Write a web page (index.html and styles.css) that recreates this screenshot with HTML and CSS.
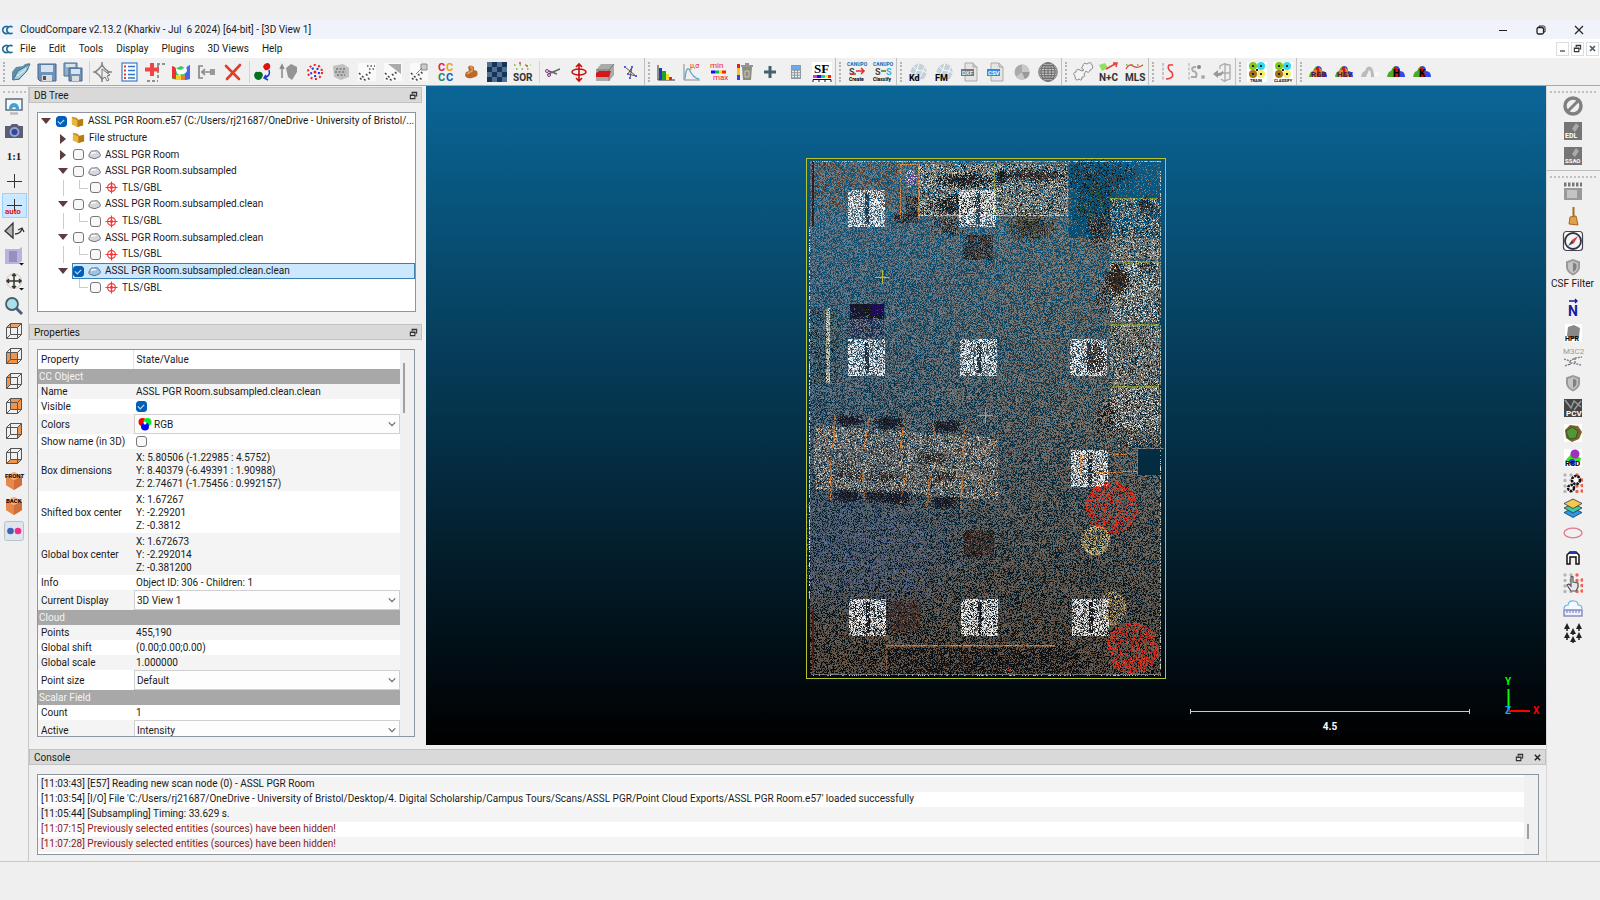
FILE: index.html
```html
<!DOCTYPE html>
<html lang="en">
<head>
  <meta charset="UTF-8">
  <title>CloudCompare</title>
  <link rel="stylesheet" href="styles.css">
</head>
<body>
  <!-- shapes used more than once -->
  <svg class="defs" aria-hidden="true">
    <symbol id="cc" viewBox="0 0 14 12"><path d="M7.500 2.500A4.300 4.300 0 1 0 7.500 9.500M12.500 2.500A4.300 4.300 0 1 0 12.500 9.500" fill="none" stroke="#1f6f9c" stroke-width="2"/></symbol>
    <symbol id="float" viewBox="0 0 10 10"><path d="M3.500 3.500V1.500H8.500V5.500H6.500M3.500 2H8.500" fill="none" stroke="#333" stroke-width="1.200"/><path d="M1.500 4.500H6.500V8.500H1.500ZM1.500 5H6.500" fill="none" stroke="#333" stroke-width="1.200"/></symbol>
    <symbol id="folder" viewBox="0 0 14 14"><path d="M1 2L6 3L8 5L13 4V11L7 13L1 10Z" fill="#c8901c"/><path d="M1 3L7 6V13L1 10Z" fill="#e9b63f"/><path d="M7 6L13 4V11L7 13Z" fill="#b67d12"/></symbol>
    <symbol id="cloud" viewBox="0 0 14 12"><path d="M4 9.500C1 10 0 6.500 2 5C2 2.500 5 1.500 6.500 2.500C9 1 12 2.500 12 4.500C14.500 6 13 9.500 10.500 9C9 10.800 5.500 10.800 4 9.500Z" fill="currentColor" stroke="#5a6068"/><path d="M3.500 5.500C4.500 3.500 7.500 3.500 8.500 4.500" fill="none" stroke="#fff" stroke-width="1.500"/></symbol>
    <symbol id="target" viewBox="0 0 14 14"><circle cx="7" cy="7" r="4.200" fill="none" stroke="#f33" stroke-width="1.300"/><circle cx="7" cy="7" r="1.600" fill="#f00"/><path d="M7 0.500V13.500M0.500 7H13.500" stroke="#f33" stroke-width="1.200"/></symbol>
    <symbol id="chev" viewBox="0 0 10 6"><path d="M1 1L5 5L9 1" fill="none" stroke="#666" stroke-width="1.400"/></symbol>
    <symbol id="cube" viewBox="0 0 20 20"><path d="M2.500 6.500H13.500V17.500H2.500ZM6.500 2.500H17.500V13.500H6.500ZM2.500 6.500L6.500 2.500M13.500 6.500L17.500 2.500M2.500 17.500L6.500 13.500M13.500 17.500L17.500 13.500" fill="none" stroke="#555"/></symbol>
    <symbol id="box" viewBox="0 0 20 20"><path d="M10 1L18 5V14L10 19L2 14V5Z" fill="#f09050"/><path d="M10 9L18 5V14L10 19Z" fill="#d07038"/><path d="M2 5L10 9V19L2 14Z" fill="#e8874a"/><path d="M2 5L10 1L18 5L10 9Z" fill="#f8b080"/></symbol>
    <symbol id="shield" viewBox="0 0 20 20"><path d="M10 2L17 4.500V11Q16 16 10 18.500Q4 16 3 11V4.500Z" fill="#999"/><path d="M10 4L15 6V11Q14 14.500 10 16.500Q6 14.500 5 11V6Z" fill="#c4c4c4"/><path d="M10 5.500L13.500 7V11Q13 13.500 10 15Z" fill="#808080"/></symbol>
    <symbol id="rock" viewBox="0 0 20 20"><path d="M2 10L5 4L11 1L17 4L19 11L16 17L6 18Z" fill="#c5d3d8"/><path d="M5 4L9 8L11 1M9 8L15 9L17 4M9 8L6 13L2 10M15 9L19 11M6 13L12 15L15 9" fill="none" stroke="#f5fafb"/></symbol>
    <symbol id="page" viewBox="0 0 20 20"><path d="M5 1H13L17 5V19H5Z" fill="#e4e4e4" stroke="#aaa"/><path d="M13 1V5H17" fill="#ccc" stroke="#aaa"/></symbol>
    <symbol id="dotgrid" viewBox="0 0 20 20"><path d="M2 2V20M8 2V20" stroke="#b5b5b5" stroke-width="3.400" stroke-linecap="round" stroke-dasharray="0 5.500"/><path d="M14 2V20M19 7V20" stroke="#f0604c" stroke-width="3.400" stroke-linecap="round" stroke-dasharray="0 5.500"/></symbol>
    <symbol id="quad" viewBox="0 0 20 20"><rect width="20" height="20" fill="#fff"/><circle cx="6" cy="4" r="4" fill="#7fc81c"/><circle cx="14" cy="4" r="4" fill="#30d8f0"/><circle cx="6" cy="12" r="4" fill="#a87410"/><circle cx="14" cy="12" r="4" fill="#f5ee70"/><path d="M5 4H7M13 4H15M5 12H7M13 12H15M9 8H11" stroke="#222" stroke-width="2"/></symbol>
    <symbol id="hills" viewBox="0 0 20 20"><path d="M1 15Q2 9 5 9Q7 4 10 4L11 15Z" fill="#4caa20"/><path d="M10 4Q14 4 14 9Q19 9 19 15H11Z" fill="#3048f0"/><path d="M8 15V5Q13 2 13 15Z" fill="#d01818"/></symbol>
    <symbol id="spots" viewBox="0 0 20 20"><rect x="1" y="1" width="18" height="18" fill="#fafafa"/><path d="M2 11l1.500 1.500M5 14l1.500 1.500M7 17l1.500 1.500M9 12l1.500 1.500M3 16l1.500 1.500M12 10l1.500 1.500M11 16l1.500 1.500" stroke="#444" stroke-width="1.600"/></symbol>
  </svg>

  <div class="app">
    <header class="titlebar">
      <svg class="app-icon"><use href="#cc"/></svg>
      <h1>CloudCompare v2.13.2 (Kharkiv - Jul  6 2024) [64-bit] - [3D View 1]</h1>
      <div class="window-buttons">
        <button aria-label="Minimize"><svg width="10" height="10"><path d="M1 5.500H9" stroke="#222"/></svg></button>
        <button aria-label="Restore"><svg width="10" height="10"><path d="M3 2.500V1H7.500Q9 1 9 2.500V7H7.500" fill="none" stroke="#222"/><rect x="1" y="2.500" width="6.500" height="6.500" rx="1.500" fill="none" stroke="#222" stroke-width="1.300"/></svg></button>
        <button aria-label="Close"><svg width="10" height="10"><path d="M1 1L9 9M9 1L1 9" stroke="#222" stroke-width="1.200"/></svg></button>
      </div>
    </header>

    <nav class="menubar">
      <svg class="app-icon"><use href="#cc"/></svg>
      <button>File</button><button>Edit</button><button>Tools</button><button>Display</button><button>Plugins</button><button>3D Views</button><button>Help</button>
      <div class="mdi-buttons">
        <button aria-label="Minimize view"><svg width="9" height="9"><path d="M2 7H7" stroke="#567" stroke-width="1.500"/></svg></button>
        <button aria-label="Restore view"><svg width="9" height="9"><use href="#float"/></svg></button>
        <button aria-label="Close view"><svg width="9" height="9"><path d="M2 2L7 7M7 2L2 7" stroke="#456" stroke-width="1.600"/></svg></button>
      </div>
    </nav>

    <div class="toolbar">
      <div class="group">
        <button title="Open"><svg viewBox="0 0 20 20"><path d="M1 10L5 5L12 4L14 2L19 1L17 8L8 18L1 18Z" fill="#5f8fa8"/><path d="M2 18L7 9L19 2L15 10L8 17Z" fill="#a9cfe0" stroke="#47758c"/><path d="M6 14L15 7" stroke="#e4f4fa"/></svg></button>
        <button title="Save"><svg viewBox="0 0 20 20"><path d="M1 2H19V19H3L1 17Z" fill="#6f92b8" stroke="#4a6486"/><rect x="4" y="3" width="12" height="7" fill="#d4e4f0"/><rect x="5" y="13" width="10" height="6" fill="#ddd"/><rect x="6" y="14" width="3" height="4" fill="#456"/></svg></button>
        <button title="Save all"><svg viewBox="0 0 20 20"><path d="M1 1H14V14H1Z" fill="#8fafcc" stroke="#4b6c90"/><rect x="3" y="2" width="9" height="3" fill="#d4e4f0"/><path d="M6 6H19V19H6Z" fill="#6f92b8" stroke="#4a6486"/><rect x="8" y="7" width="9" height="5" fill="#d4e4f0"/><rect x="9" y="14" width="7" height="5" fill="#ddd"/></svg></button>
        <span class="sep"></span>
        <button title="Pick point"><svg viewBox="0 0 20 20"><path d="M9 3L12 7L16 10L12 14L9 17L6 13L2 10L6 7Z" fill="none" stroke="#888" stroke-width="1.600"/><path d="M9 0V5M9 15V20M0 10H4M14 10H19" stroke="#888" stroke-width="1.600"/><path d="M9 7L17 13L14 14L16 18L14 19L12 15L9 17Z" fill="#eee" stroke="#777"/></svg></button>
        <button title="Point list"><svg viewBox="0 0 20 20"><rect x="3" y="1" width="15" height="18" fill="#f8fbff" stroke="#3c7cc8" stroke-width="1.200"/><path d="M5 4.500H7M5 8.500H7M5 12.500H7M5 16H7" stroke="#e04030" stroke-width="2"/><path d="M9 4.500H16M9 8.500H16M9 12.500H16M9 16H16" stroke="#3478c8" stroke-width="1.500"/></svg></button>
        <button title="Clone"><svg viewBox="0 0 20 20"><path d="M12 2H20M13 3V18M2 19H13" fill="none" stroke="#333" stroke-dasharray="3 2"/><path d="M7 1V14M0 7.500H14" stroke="#f04444" stroke-width="4"/></svg></button>
        <button title="Merge"><svg viewBox="0 0 20 20"><path d="M1 4L6 6L10 4L14 6L19 3V17L14 18H8L1 17Z" fill="#38c860"/><path d="M1 4L5 6V17L1 16Z" fill="#f03030"/><path d="M5 13H10V18H5Z" fill="#f4d020"/><path d="M10 13H14V18H10Z" fill="#f08020"/><path d="M14 6L19 3V17L14 18Z" fill="#4868e8"/><path d="M4 4C6 9 9 7 10 8C12 6 14 7 15 3L16 9Q14 13 11 12L8 13L6 11Z" fill="#fff"/></svg></button>
        <button title="Subsample"><svg viewBox="0 0 20 20"><path d="M6 4H2V16H6M5 10H13M8 7L5 10L8 13" fill="none" stroke="#888" stroke-width="1.700"/><rect x="13" y="7" width="5" height="6" fill="#999"/></svg></button>
        <button title="Delete"><svg viewBox="0 0 20 20"><path d="M3 4L16 17M17 3L4 17" stroke="#d8402c" stroke-width="2.600" stroke-linecap="round"/></svg></button>
        <span class="sep"></span>
        <button title="Register"><svg viewBox="0 0 20 20"><path d="M10 5Q11 1 15 1Q18 2 17 6Q15 9 12 8Z" fill="#e01010"/><path d="M1 13Q2 9 5 10Q9 9 10 13Q9 18 5 18Q1 17 1 13Z" fill="#087020"/><path d="M16 8Q18 14 11 16M13 13L11 16L15 18" fill="none" stroke="#1838d8" stroke-width="1.500"/></svg></button>
        <button title="Align"><svg viewBox="0 0 20 20"><path d="M3 16V4M1 7L3 3L5 7" fill="none" stroke="#888" stroke-width="1.500"/><path d="M7 6L12 2L18 5V10L13 18L9 15Z" fill="#949494"/></svg></button>
        <button title="Sample points"><svg viewBox="0 0 20 20"><circle cx="10" cy="10" r="7" fill="none" stroke="#f02020" stroke-width="2" stroke-dasharray="2 2.500"/><circle cx="10" cy="10" r="4" fill="none" stroke="#2030e0" stroke-width="2" stroke-dasharray="2 3"/><circle cx="10" cy="10" r="1.500" fill="#f02020"/></svg></button>
        <button title="Cloud distances"><svg viewBox="0 0 20 20"><path d="M2 4L12 2L18 6V15L10 18L3 15Z" fill="#c0c0c0"/><path d="M5 7H14M4 10H15M6 13H14" stroke="#888" stroke-width="2" stroke-dasharray="2 1.500"/></svg></button>
        <button title="Cloud to cloud"><svg viewBox="0 0 20 20"><use href="#spots"/><path d="M10 4H18M12 7H18" stroke="#555" stroke-dasharray="1.500 2" stroke-width="1.500"/></svg></button>
        <button title="Cloud to mesh"><svg viewBox="0 0 20 20"><use href="#spots"/><path d="M5 2H18V12Z" fill="#aaa"/></svg></button>
        <button title="Cloud to primitive"><svg viewBox="0 0 20 20"><use href="#spots"/><path d="M12 2H18V8H12ZM7 12L13 6" stroke="#888" fill="#ccc"/></svg></button>
        <button title="Statistics"><svg viewBox="0 0 20 20" class="bold"><text x="3" y="9" fill="#e02050" font-size="11">C</text><text x="11" y="9" fill="#f0a020" font-size="11">C</text><text x="3" y="19" fill="#109060" font-size="11">C</text><text x="11" y="19" fill="#1060c8" font-size="11">C</text></svg></button>
        <button title="Label components"><svg viewBox="0 0 20 20"><path d="M7 5Q9 2 13 5L13 8L16 9Q18 14 14 15L11 16Q5 17 4 13L5 10L8 9Z" fill="#b8692a"/><path d="M9 5Q12 5 11 9L6 12" fill="none" stroke="#e0a060" stroke-width="1.500"/></svg></button>
        <button title="Cross section"><svg viewBox="0 0 20 20"><rect width="20" height="20" fill="#1c3454"/><path d="M0 0H5V5H0ZM10 0H15V5H10ZM5 5H10V10H5ZM15 5H20V10H15ZM0 10H5V15H0ZM10 10H15V15H10ZM5 15H10V20H5ZM15 15H20V20H15Z" fill="#4c729c"/></svg></button>
        <button title="SOR filter"><svg viewBox="0 0 20 20" class="bold"><path d="M1 3H18M3 7H18" stroke="#70b030" stroke-width="1.500" stroke-dasharray="1.500 4"/><path d="M6 1h2M13 4h2" stroke="#e04040" stroke-width="1.500"/><text x="0" y="19" font-size="10" fill="#333">SOR</text></svg></button>
        <span class="sep"></span>
        <button title="Segment"><svg viewBox="0 0 20 20"><path d="M5 12L17 7M6 9L14 12" stroke="#666" stroke-width="1.400"/><circle cx="4" cy="9" r="1.500" fill="none" stroke="#803080"/><circle cx="6" cy="13" r="1.500" fill="none" stroke="#803080"/></svg></button>
        <button title="Translate/Rotate"><svg viewBox="0 0 20 20"><path d="M10 2V18M7 5L10 2L13 5M7 16L10 19L13 16" fill="none" stroke="#c81010" stroke-width="1.600"/><ellipse cx="10" cy="10" rx="7" ry="3" fill="none" stroke="#c81010" stroke-width="1.600"/></svg></button>
        <button title="Cross Section"><svg viewBox="0 0 20 20"><path d="M1 8L6 2H19V13L14 19H1Z" fill="#aaa"/><path d="M1 8H14L19 2M14 8V19" fill="none" stroke="#777"/><path d="M1 11L4 9H16L14 15H1Z" fill="#d81818"/></svg></button>
        <button title="Trace polyline"><svg viewBox="0 0 20 20"><path d="M4 5L15 14L7 12L11 5L9 16" fill="none" stroke="#555"/><path d="M3 5h2M14 14h2M6 12h2M10 5h2M8 16h2" stroke="#5060f0" stroke-width="2"/></svg></button>
      </div>
      <div class="group">
        <button title="Histogram"><svg viewBox="0 0 20 20"><path d="M2 3V18H19" fill="none" stroke="#333"/><rect x="3" y="6" width="3" height="12" fill="#2038c0"/><rect x="6" y="9" width="4" height="9" fill="#20a030"/><rect x="10" y="12" width="3" height="6" fill="#f0e020"/><rect x="13" y="15" width="3" height="3" fill="#f02020"/></svg></button>
        <button title="Fit distribution"><svg viewBox="0 0 20 20"><path d="M2 2V18H18" fill="none" stroke="#888"/><path d="M3 17Q4 5 7 7Q11 16 17 17" fill="none" stroke="#60a8d0" stroke-width="1.300"/><text x="8" y="6" font-size="7" fill="#e02020">μ,σ</text></svg></button>
        <button title="Min / max"><svg viewBox="0 0 20 20"><text x="2" y="6" font-size="8" fill="#f02020">min</text><path d="M3 10H7" stroke="#20f" stroke-width="3"/><path d="M7 10H11" stroke="#0b5" stroke-width="3"/><path d="M11 10H14" stroke="#fd0" stroke-width="3"/><path d="M14 10H18" stroke="#f20" stroke-width="3"/><text x="5" y="18" font-size="8" fill="#f02020">max</text></svg></button>
        <button title="Delete scalar field"><svg viewBox="0 0 20 20"><rect x="3" y="2" width="3" height="16" fill="#f8c020"/><path d="M4.500 2V6" stroke="#e02020" stroke-width="3"/><path d="M4.500 13V18" stroke="#3040f0" stroke-width="3"/><path d="M8 5H18L17 18H9Z" fill="#8c8c80"/><path d="M7 4H19M11 2H15" stroke="#777" stroke-width="1.500"/><path d="M11 9H15V15H11Z" fill="none" stroke="#c8c8b8"/></svg></button>
        <button title="Add constant"><svg viewBox="0 0 20 20"><path d="M10 4V16M4 10H16" stroke="#44606c" stroke-width="3"/></svg></button>
        <button title="Arithmetic"><svg viewBox="0 0 20 20"><rect x="5" y="3" width="10" height="14" fill="#8d99a5"/><rect x="6" y="4" width="8" height="3" fill="#6caae8"/><path d="M6 9.500H14M6 12H14M6 14.500H14" stroke="#eee" stroke-width="1.500" stroke-dasharray="2 1"/></svg></button>
        <button title="Scalar field"><svg viewBox="0 0 20 20" class="serif"><rect width="20" height="20" fill="#fff"/><text x="2" y="11" font-size="13">SF</text><path d="M1 14.500H5" stroke="#e030e0" stroke-width="3"/><path d="M5 14.500H9" stroke="#30f" stroke-width="3"/><path d="M9 14.500H13" stroke="#0d7" stroke-width="3"/><path d="M13 14.500H16" stroke="#fe0" stroke-width="3"/><path d="M16 14.500H19" stroke="#f20" stroke-width="3"/><path d="M1 20V17.500H19V20M7 17.500V20M13 17.500V20" fill="none" stroke="#111"/></svg></button>
      </div>
      <div class="group">
        <button title="CANUPO Create"><svg viewBox="0 0 20 20" class="bold"><text x="0" y="4" font-size="5" fill="#2068b0">CANUPO</text><text x="2" y="13" font-size="9" fill="#444">S</text><path d="M3 12H9M9 9H17M14 6L17 9L14 12" fill="none" stroke="#e03030" stroke-width="1.500"/><text x="2" y="19" font-size="5">Create</text></svg></button>
        <button title="CANUPO Classify"><svg viewBox="0 0 20 20" class="bold"><text x="0" y="4" font-size="5" fill="#2068b0">CANUPO</text><text x="2" y="13" font-size="9" fill="#444">S</text><text x="13" y="13" font-size="9" fill="#30b8e0">S</text><path d="M8 9H13" stroke="#308030" stroke-width="1.500"/><text x="0" y="19" font-size="5">Classify</text></svg></button>
      </div>
      <div class="group">
        <button title="Kd-tree"><svg viewBox="0 0 20 20" class="bold"><use href="#rock"/><text x="1" y="19" font-size="9">Kd</text></svg></button>
        <button title="Fast marching"><svg viewBox="0 0 20 20" class="bold"><use href="#rock"/><text x="1" y="19" font-size="9">FM</text></svg></button>
        <button title="Export DXF"><svg viewBox="0 0 20 20" class="bold"><use href="#page"/><rect x="1" y="7" width="13" height="7" fill="#777"/><text x="2" y="13" font-size="6" fill="#eee">DXF</text></svg></button>
        <button title="Export CSV"><svg viewBox="0 0 20 20" class="bold"><use href="#page"/><rect x="1" y="7" width="13" height="7" fill="#3888e0"/><text x="2" y="13" font-size="6" fill="#fff">CSV</text></svg></button>
        <button title="Facets"><svg viewBox="0 0 20 20"><circle cx="10" cy="10" r="7.500" fill="#aaa"/><path d="M10 10V2.500A7.500 7.500 0 0 1 17.500 10ZM10 10L4 15A7.500 7.500 0 0 0 13 17Z" fill="#c8c8c8"/><path d="M10 10H17.500A7.500 7.500 0 0 1 13 17Z" fill="#9a9a9a"/></svg></button>
        <button title="Stereogram"><svg viewBox="0 0 20 20"><g fill="none" stroke="#666" stroke-width="0.900"><circle cx="10" cy="10" r="9.300" fill="#ddd"/><ellipse cx="10" cy="10" rx="7" ry="9.300"/><ellipse cx="10" cy="10" rx="3.500" ry="9.300"/><path d="M10 1V19M1 10H19M2 6.500H18M2 13.500H18M4 3.500H16M4 16.500H16M1.500 8.300H18.500M1.500 11.700H18.500M3 5H17M3 15H17"/></g></svg></button>
      </div>
      <div class="group">
        <button title="Cluster"><svg viewBox="0 0 20 20"><path d="M2 14Q-1 11 3 10Q3 6 7 8Q9 10 11 8Q7 6 10 4Q10 0 14 2Q18 -1 19 3Q21 7 17 8Q16 12 13 9Q12 11 11 12Q13 15 9 15Q9 20 6 17Q2 20 2 14Z" fill="#f3f3f3" stroke="#888"/></svg></button>
        <button title="Normals and curvature"><svg viewBox="0 0 20 20" class="bold"><path d="M0 3L6 1L9 6L3 9Z" fill="#90e060"/><path d="M7 7L18 1M14 1H18L17 5" stroke="#e04040" stroke-width="1.500" fill="none"/><text x="0" y="19" font-size="10" fill="#333">N+C</text></svg></button>
        <button title="MLS"><svg viewBox="0 0 20 20" class="bold"><path d="M1 7Q4 1 8 4T18 3" fill="none" stroke="#e04040" stroke-width="1.300"/><path d="M1 3H18" stroke="#70b030" stroke-width="1.500" stroke-dasharray="1.500 4"/><text x="0" y="19" font-size="10" fill="#333">MLS</text></svg></button>
      </div>
      <div class="group">
        <button title="Extract section"><svg viewBox="0 0 20 20"><path d="M3 1V19" stroke="#999" stroke-dasharray="3 1.500"/><path d="M13 3H9Q7 6 10 9Q14 11 12 15Q10 17 6 17" fill="none" stroke="#f03838" stroke-width="1.500"/></svg></button>
        <button title="Section points"><svg viewBox="0 0 20 20"><path d="M3 1V19" stroke="#aaa" stroke-dasharray="3 1.500"/><path d="M10 5Q4 5 7 9Q12 10 10 15H5" fill="none" stroke="#aaa" stroke-width="2"/><circle cx="13" cy="5" r="2" fill="#888"/><circle cx="17" cy="15" r="2" fill="#aaa"/></svg></button>
        <button title="Unfold"><svg viewBox="0 0 20 20"><path d="M1 12L6 8V11Q10 11 11 8Q12 14 6 14V16Z" fill="#999"/><path d="M8 7V4L12 2L18 3V17L12 19L9 17M13 1V20M11 11H18" fill="none" stroke="#aaa" stroke-width="1.300"/></svg></button>
      </div>
      <div class="group">
        <button title="3DMASC train"><svg viewBox="0 0 20 20" class="bold"><use href="#quad"/><text x="3" y="20" font-size="4">TRAIN</text></svg></button>
        <button title="3DMASC classify"><svg viewBox="0 0 20 20" class="bold"><use href="#quad"/><text x="1" y="20" font-size="4">CLASSIFY</text></svg></button>
      </div>
      <div class="group">
        <button title="RGB"><svg viewBox="0 0 20 20" class="bold"><use href="#hills"/><path d="M3 15L6 8H9V15ZM11 5L14 8L15 15H12Z" fill="#e88020"/><text x="3" y="15" font-size="8" fill="#402050">RGB</text></svg></button>
        <button title="HSV"><svg viewBox="0 0 20 20" class="bold"><use href="#hills"/><path d="M3 15L6 8H9V15ZM11 5L14 8L15 15H12Z" fill="#f08030"/><text x="3" y="15" font-size="8" fill="#402050">HSV</text></svg></button>
        <button title="Filter"><svg viewBox="0 0 20 20"><path d="M1 15Q2 9 5 9Q7 3 11 5Q14 8 14 15H11Q11 8 9 8L6 15Z" fill="#bbb"/><circle cx="17" cy="12" r="2.500" fill="#f8f8f8"/></svg></button>
        <button title="Hillshade"><svg viewBox="0 0 20 20" class="bold"><use href="#hills"/><text x="7" y="15" font-size="10">H</text></svg></button>
        <button title="K-means"><svg viewBox="0 0 20 20" class="bold"><use href="#hills"/><text x="7" y="15" font-size="10">K</text></svg></button>
      </div>
    </div>

    <main class="workspace">
      <aside class="sidebar left">
        <div class="vgroup">
          <button title="Display settings"><svg viewBox="0 0 20 20"><rect x="2" y="3" width="16" height="11" fill="#f4fafc" stroke="#506478" stroke-width="1.400"/><path d="M5 13.500Q5 7 10 7Q15 7 15 13.500H12Q12 11 10 11Q8 11 8 13.500Z" fill="#40a0d8"/><path d="M6 17.500H14" stroke="#bbb" stroke-width="2.500"/></svg></button>
          <button title="Render to file"><svg viewBox="0 0 20 20"><path d="M1 5H6L8 3H13L15 5H19V17H1Z" fill="#5a5e74"/><circle cx="10.500" cy="11" r="5" fill="#98a2cc"/><circle cx="10.500" cy="11" r="3" fill="#3044a0"/></svg></button>
          <button title="Zoom 1:1" class="ratio">1:1</button>
          <button title="Set pivot"><svg viewBox="0 0 20 20"><path d="M10.500 3V17M3 10.500H18" stroke="#333"/></svg></button>
          <button title="Auto pivot" class="on"><svg viewBox="0 0 20 20" class="bold"><path d="M10.500 3V15M3 9.500H18" stroke="#333"/><text x="1" y="18" font-size="8" fill="#e01010">auto</text></svg></button>
          <button title="Rotate view"><svg viewBox="0 0 20 20"><path d="M9 2V17L1 10Z" fill="#b4b4b0" stroke="#333" stroke-width="1.300"/><path d="M11 13Q16 13 18 8M14 9L18 7L20 11" fill="none" stroke="#333" stroke-width="1.300"/></svg></button>
          <button title="View mode"><svg viewBox="0 0 20 20"><path d="M1 3H15L18 1V15L14 18H1Z" fill="#b9b4dc"/><rect x="5" y="5" width="8" height="11" fill="#9590be"/><path d="M15 17H20L17.500 19.500Z" fill="#111"/></svg></button>
          <button title="Pan"><svg viewBox="0 0 20 20"><circle cx="10" cy="10" r="7.500" fill="#eef4e8" stroke="#d8b8d0"/><path d="M10 3V17M3 10H17M8 5L10 3L12 5M8 15L10 17L12 15M5 8L3 10L5 12M15 8L17 10L15 12" fill="none" stroke="#333" stroke-width="1.500"/><path d="M15 17H20L17.500 19.500Z" fill="#111"/></svg></button>
          <button title="Zoom"><svg viewBox="0 0 20 20"><circle cx="8" cy="8" r="6" fill="#a8e0ec" stroke="#4a5c68" stroke-width="1.800"/><path d="M12.500 12.500L18 18" stroke="#4a6078" stroke-width="3"/></svg></button>
          <button title="Top view"><svg viewBox="0 0 20 20"><path d="M2.500 6.500L6.500 2.500H17.500L13.500 6.500Z" fill="#f0a060"/><use href="#cube"/></svg></button>
          <button title="Front view"><svg viewBox="0 0 20 20"><path d="M2.500 6.500H13.500V17.500H2.500Z" fill="#f0944c"/><use href="#cube"/></svg></button>
          <button title="Left view"><svg viewBox="0 0 20 20"><path d="M2.500 6.500L6.500 2.500V13.500L2.500 17.500Z" fill="#f0944c"/><use href="#cube"/></svg></button>
          <button title="Back view"><svg viewBox="0 0 20 20"><path d="M6.500 2.500H17.500V13.500H6.500Z" fill="#f0944c"/><use href="#cube"/></svg></button>
          <button title="Right view"><svg viewBox="0 0 20 20"><path d="M13.500 6.500L17.500 2.500V13.500L13.500 17.500Z" fill="#f0944c"/><use href="#cube"/></svg></button>
          <button title="Bottom view"><svg viewBox="0 0 20 20"><path d="M2.500 17.500L6.500 13.500H17.500L13.500 17.500Z" fill="#f0944c"/><use href="#cube"/></svg></button>
          <button title="Front isometric"><svg viewBox="0 0 20 20" class="bold"><use href="#box"/><text x="1" y="7" font-size="6">FRONT</text></svg></button>
          <button title="Back isometric"><svg viewBox="0 0 20 20" class="bold"><use href="#box"/><text x="2" y="7" font-size="6">BACK</text></svg></button>
          <button title="Stereo"><svg viewBox="0 0 20 20"><rect x="0.500" y="0.500" width="19" height="19" rx="2" fill="#dde6ec" stroke="#b8c4cc"/><circle cx="6.500" cy="10" r="3.300" fill="#4060b8"/><circle cx="14" cy="10" r="3.300" fill="#f02c88"/></svg></button>
        </div>
      </aside>

      <div class="center">
        <div class="upper">
          <div class="docks">
            <section class="dock">
              <h2>DB Tree <button aria-label="Float DB Tree"><svg><use href="#float"/></svg></button></h2>
              <ul class="tree panel">
                <li><i class="arrow open"></i><label><input type="checkbox" checked><svg><use href="#folder"/></svg>ASSL PGR Room.e57 (C:/Users/rj21687/OneDrive - University of Bristol/...</label></li>
                <li class="l1"><i class="arrow"></i><label><svg><use href="#folder"/></svg>File structure</label></li>
                <li class="l1"><i class="arrow"></i><label><input type="checkbox"><svg><use href="#cloud"/></svg>ASSL PGR Room</label></li>
                <li class="l1"><i class="arrow open"></i><label><input type="checkbox"><svg><use href="#cloud"/></svg>ASSL PGR Room.subsampled</label></li>
                <li class="l2"><i class="line"></i><i class="elbow"></i><label><input type="checkbox"><svg><use href="#target"/></svg>TLS/GBL</label></li>
                <li class="l1"><i class="arrow open"></i><label><input type="checkbox"><svg><use href="#cloud"/></svg>ASSL PGR Room.subsampled.clean</label></li>
                <li class="l2"><i class="line"></i><i class="elbow"></i><label><input type="checkbox"><svg><use href="#target"/></svg>TLS/GBL</label></li>
                <li class="l1"><i class="arrow open"></i><label><input type="checkbox"><svg><use href="#cloud"/></svg>ASSL PGR Room.subsampled.clean</label></li>
                <li class="l2"><i class="line"></i><i class="elbow"></i><label><input type="checkbox"><svg><use href="#target"/></svg>TLS/GBL</label></li>
                <li class="l1 selected"><i class="arrow open"></i><label><input type="checkbox" checked><svg><use href="#cloud"/></svg>ASSL PGR Room.subsampled.clean.clean</label></li>
                <li class="l2"><i></i><i class="elbow"></i><label><input type="checkbox"><svg><use href="#target"/></svg>TLS/GBL</label></li>
              </ul>
            </section>

            <section class="dock props">
              <h2>Properties <button aria-label="Float Properties"><svg><use href="#float"/></svg></button></h2>
              <div class="panel scroll">
                <table>
                  <thead><tr><th>Property</th><th>State/Value</th></tr></thead>
                  <tbody>
                    <tr class="section"><td colspan="2">CC Object</td></tr>
                    <tr class="alt"><td>Name</td><td>ASSL PGR Room.subsampled.clean.clean</td></tr>
                    <tr><td><label for="visible">Visible</label></td><td><input type="checkbox" id="visible" checked></td></tr>
                    <tr class="alt combo"><td><label for="colors">Colors</label></td><td><div class="select has-icon"><svg class="rgb" viewBox="0 0 14 14"><circle cx="4.500" cy="5" r="4" fill="#f00"/><circle cx="9.500" cy="5" r="4" fill="#0e2"/><circle cx="7" cy="9.500" r="4" fill="#00f"/><circle cx="7" cy="6" r="1.500" fill="#fff"/></svg><select id="colors"><option>RGB</option></select><svg class="chev"><use href="#chev"/></svg></div></td></tr>
                    <tr><td><label for="showname">Show name (in 3D)</label></td><td><input type="checkbox" id="showname"></td></tr>
                    <tr class="alt tall"><td>Box dimensions</td><td>X: 5.80506 (-1.22985 : 4.5752)<br>Y: 8.40379 (-6.49391 : 1.90988)<br>Z: 2.74671 (-1.75456 : 0.992157)</td></tr>
                    <tr class="tall"><td>Shifted box center</td><td>X: 1.67267<br>Y: -2.29201<br>Z: -0.3812</td></tr>
                    <tr class="alt tall"><td>Global box center</td><td>X: 1.672673<br>Y: -2.292014<br>Z: -0.381200</td></tr>
                    <tr><td>Info</td><td>Object ID: 306 - Children: 1</td></tr>
                    <tr class="alt combo"><td><label for="display">Current Display</label></td><td><div class="select"><select id="display"><option>3D View 1</option></select><svg class="chev"><use href="#chev"/></svg></div></td></tr>
                    <tr class="section"><td colspan="2">Cloud</td></tr>
                    <tr class="alt"><td>Points</td><td>455,190</td></tr>
                    <tr><td>Global shift</td><td>(0.00;0.00;0.00)</td></tr>
                    <tr class="alt"><td>Global scale</td><td>1.000000</td></tr>
                    <tr class="combo"><td><label for="psize">Point size</label></td><td><div class="select"><select id="psize"><option>Default</option></select><svg class="chev"><use href="#chev"/></svg></div></td></tr>
                    <tr class="section"><td colspan="2">Scalar Field</td></tr>
                    <tr><td>Count</td><td>1</td></tr>
                    <tr class="alt combo"><td><label for="active">Active</label></td><td><div class="select"><select id="active"><option>Intensity</option></select><svg class="chev"><use href="#chev"/></svg></div></td></tr>
                  </tbody>
                </table>
                <div class="track"><i></i></div>
              </div>
            </section>
          </div>

          <section class="view">
            <canvas id="cloud-view" width="360" height="521"></canvas>
            <div class="scale"><i></i>4.5</div>
            <svg class="axes" width="46" height="46" viewBox="0 0 46 46"><path d="M14.500 16V38" stroke="#0f0" stroke-width="2"/><path d="M14 38H36" stroke="#f00" stroke-width="2"/><text x="11" y="12" fill="#0f0">Y</text><text x="39" y="41" fill="#f00">X</text><text x="11" y="41" fill="#18a0f0">Z</text></svg>
          </section>
        </div>

        <section class="dock console">
          <h2>Console <button aria-label="Float Console"><svg><use href="#float"/></svg></button><button aria-label="Close Console"><svg viewBox="0 0 10 10"><path d="M2 2L8 8M8 2L2 8" stroke="#222" stroke-width="1.600"/></svg></button></h2>
          <div class="panel scroll">
            <ol>
              <li>[11:03:43] [E57] Reading new scan node (0) - ASSL PGR Room</li>
              <li>[11:03:54] [I/O] File 'C:/Users/rj21687/OneDrive - University of Bristol/Desktop/4. Digital Scholarship/Campus Tours/Scans/ASSL PGR/Point Cloud Exports/ASSL PGR Room.e57' loaded successfully</li>
              <li>[11:05:44] [Subsampling] Timing: 33.629 s.</li>
              <li class="warn">[11:07:15] Previously selected entities (sources) have been hidden!</li>
              <li class="warn">[11:07:28] Previously selected entities (sources) have been hidden!</li>
            </ol>
            <div class="track"><i></i></div>
          </div>
        </section>
      </div>

      <aside class="sidebar right">
        <div class="vgroup">
          <button title="Remove filter"><svg viewBox="0 0 20 20"><circle cx="10" cy="10" r="8" fill="none" stroke="#808080" stroke-width="3.500"/><path d="M5 15L15 5" stroke="#808080" stroke-width="3"/></svg></button>
          <button title="EDL"><svg viewBox="0 0 20 20" class="bold"><rect x="1" y="1" width="18" height="18" fill="#757575"/><path d="M9 8L13 2L16 5L12 11" fill="#aaa"/><text x="2" y="17" font-size="7" fill="#fff">EDL</text></svg></button>
          <button title="SSAO"><svg viewBox="0 0 20 20" class="bold"><rect x="1" y="1" width="18" height="18" fill="#757575"/><path d="M9 8L13 2L16 5L12 11" fill="#aaa"/><text x="2" y="17" font-size="6" fill="#fff">SSAO</text></svg></button>
        </div>
        <div class="vgroup">
          <button title="Animation"><svg viewBox="0 0 20 20"><rect x="1" y="7" width="18" height="12" fill="#999"/><rect x="4" y="9" width="10" height="8" fill="#c4c4c4"/><path d="M1 3.500H19" stroke="#777" stroke-width="4" stroke-dasharray="2.500 1.500"/></svg></button>
          <button title="Broom"><svg viewBox="0 0 20 20"><path d="M10.500 1V11" stroke="#a86820" stroke-width="2"/><path d="M7 11L13 10L15 19L6 18Z" fill="#e0a04c" stroke="#a86820"/></svg></button>
          <button title="Compass"><svg viewBox="0 0 20 20"><rect x="0.500" y="0.500" width="19" height="19" rx="3" fill="#fff" stroke="#445" stroke-width="1.200"/><circle cx="10" cy="10" r="8" fill="#f4f4f4" stroke="#334" stroke-width="1.800"/><path d="M15 5L11 12L9 9Z" fill="#e83030"/><path d="M5 15L9 9L11 12Z" fill="#444"/></svg></button>
          <button title="CSF Filter" class="labelled"><svg viewBox="0 0 20 20"><use href="#shield"/></svg><span>CSF Filter</span></button>
          <button title="Hough normals"><svg viewBox="0 0 20 20" class="bold"><path d="M6 3H14M12 1L14 3L12 5" fill="none" stroke="#1818a0" stroke-width="1.300"/><text x="5" y="18" font-size="14" fill="#1818a0">N</text></svg></button>
          <button title="HPR"><svg viewBox="0 0 20 20" class="bold"><rect x="2" y="1" width="17" height="18" fill="#fff"/><path d="M5 4L11 2L17 5L16 14L10 16L4 13Z" fill="#888"/><text x="2" y="18" font-size="7">HPR</text></svg></button>
          <button title="M3C2"><svg viewBox="0 0 20 20"><text x="0" y="6" font-size="8" fill="#999">M3C2</text><path d="M1 11L7 13L12 10L19 9M2 18L9 15L18 17M7 13V17M12 10V16" fill="none" stroke="#777" stroke-width="1.300" stroke-dasharray="2 1"/></svg></button>
          <button title="MPlane"><svg viewBox="0 0 20 20"><use href="#shield"/></svg></button>
          <button title="PCV"><svg viewBox="0 0 20 20" class="bold"><rect x="1" y="1" width="18" height="18" fill="#444"/><path d="M2 2L8 10L11 3L18 9M11 12L18 3" stroke="#999" stroke-width="1.500" fill="none"/><text x="3" y="18" font-size="8" fill="#fff">PCV</text></svg></button>
          <button title="Poisson"><svg viewBox="0 0 20 20"><rect x="1" y="1" width="18" height="18" fill="#fff"/><path d="M7 2L15 3L19 9L16 16L9 19L3 15L2 7Z" fill="#80602c"/><path d="M3 8L9 4L15 8L13 15L6 16Z" fill="#559438" stroke="#2c5c20"/></svg></button>
          <button title="RANSAC"><svg viewBox="0 0 20 20" class="bold"><rect x="1" y="1" width="18" height="18" fill="#fff"/><path d="M2 13L8 6L18 10L17 14Z" fill="#40e020"/><circle cx="12" cy="6" r="4.500" fill="#a030c0"/><circle cx="9" cy="14" r="3" fill="#2040f0"/><text x="2" y="18" font-size="8">RSD</text></svg></button>
          <button title="Gears"><svg viewBox="0 0 20 20"><use href="#dotgrid"/><circle cx="13" cy="7" r="4" fill="#fff" stroke="#111" stroke-width="2.500" stroke-dasharray="2.500 0.800"/><circle cx="8" cy="15" r="3" fill="#fff" stroke="#111" stroke-width="2.500" stroke-dasharray="2.500 0.800"/></svg></button>
          <button title="Layers"><svg viewBox="0 0 20 20" stroke="#234" stroke-width="0.800"><path d="M10 10L19 14.500L10 19.500L1 14.500Z" fill="#2898e8"/><path d="M10 5.500L19 10L10 15L1 10Z" fill="#40c8a8"/><path d="M10 1L19 5.500L10 10.500L1 5.500Z" fill="#f8c848"/></svg></button>
          <button title="Ellipser"><svg viewBox="0 0 20 20"><ellipse cx="10" cy="10" rx="9" ry="4.800" fill="none" stroke="#e07888" stroke-width="1.300"/></svg></button>
          <button title="Tunnel"><svg viewBox="0 0 20 20"><path d="M4 16V7L7 4H13L16 7V16H13V9H7V16Z" fill="#fff" stroke="#111" stroke-width="1.500"/><path d="M6 5L8 3.500H12L14 5V6H6Z" fill="#1838c0"/></svg></button>
          <button title="Manual segment"><svg viewBox="0 0 20 20"><use href="#dotgrid"/><path d="M8 18L4 12L6 11L8 13V4Q9 3 10 4V9L15 10V14L13 18Z" fill="#e8e8e8" stroke="#555" stroke-width="1.200"/></svg></button>
          <button title="Cloud layers"><svg viewBox="0 0 20 20"><path d="M1 11Q1 7 5 7Q6 2 11 3Q15 3 15 7Q19 7 19 11" fill="#f4faff" stroke="#6cb0e0" stroke-width="1.200"/><rect x="1" y="12" width="18" height="6" fill="#eef" stroke="#7078b0" stroke-width="1.200"/><path d="M4 12V15M7 12V15M10 12V15M13 12V15M16 12V15" stroke="#7078b0"/></svg></button>
          <button title="TreeIso"><svg viewBox="0 0 20 20"><path d="M4 0L7 6H1ZM10 5L13 11H7ZM16 0L19 6H13ZM4 9L7 15H1ZM16 9L19 15H13ZM10 13L13 19H7Z" fill="#222"/><path d="M4 5V8M16 5V8M10 10V12M4 14V17M16 14V17M10 18V20" stroke="#222" stroke-width="1.500"/></svg></button>
        </div>
      </aside>
    </main>
  </div>
  <script src="cloud.js"></script>
</body>
</html>
```
FILE: styles.css
```css
*,
*::before,
*::after {
  box-sizing: border-box;
}

body {
  margin: 0;
  min-height: 100vh;
  padding: 20px 0 38px;
  display: flex;
  flex-direction: column;
  background: #efefef;
  color: #1a1a1a;
  font: 10px/14px Roboto, "Open Sans", sans-serif;
}

h1, h2, ul, ol {
  margin: 0;
  padding: 0;
  font-size: 10px;
  font-weight: normal;
  list-style: none;
}

button {
  padding: 0;
  border: 0;
  background: none;
  color: inherit;
  font: inherit;
}

svg {
  display: block;
  flex: none;
  overflow: visible;
}

.defs {
  position: absolute;
  width: 0;
  height: 0;
}

.bold {
  font-family: Roboto, sans-serif;
  font-weight: bold;
}

.serif {
  font-family: "Liberation Serif", serif;
  font-weight: bold;
}

.app {
  flex: 1;
  display: flex;
  flex-direction: column;
  background: #f0f0f0;
}

/* title and menu */
.titlebar,
.menubar {
  height: 19px;
  display: flex;
  align-items: center;
}

.titlebar {
  background: #f0f3fa;
}

.titlebar h1 {
  white-space: pre;
}

.app-icon {
  width: 12px;
  height: 10px;
  margin: 0 6px 0 2px;
}

.window-buttons {
  margin-left: auto;
  padding-right: 2px;
  display: flex;
}

.window-buttons button {
  width: 38px;
  display: flex;
  justify-content: center;
}

.menubar {
  background: #fff;
}

.menubar > button {
  margin-right: 13px;
}

.mdi-buttons {
  margin-left: auto;
  display: flex;
  gap: 2px;
  padding-right: 1px;
}

.mdi-buttons button {
  width: 13px;
  height: 14px;
  border: 1px solid #ddd;
  display: flex;
  align-items: center;
  justify-content: center;
}

/* top toolbar */
.toolbar {
  height: 28px;
  display: flex;
  border-bottom: 1px solid #a8a8a8;
}

.group {
  display: flex;
  align-items: center;
}

.group::before {
  content: "";
  width: 3px;
  height: 20px;
  margin: 0 2px 0 3px;
  border-left: 2px dotted #b4b4b4;
}

.group + .group {
  border-left: 1px solid #c0c0c0;
}

.group button {
  width: 26px;
  display: flex;
  justify-content: center;
}

.group button svg,
.vgroup button svg {
  width: 20px;
  height: 20px;
}

.sep {
  width: 4px;
  height: 22px;
  border-right: 1px solid #d4d4d4;
}

.workspace {
  flex: 1;
  display: flex;
  border-bottom: 1px solid #c8c8c8;
}

.sidebar {
  width: 29px;
}

.left {
  border-right: 1px solid #c8c8c8;
}

.right {
  width: 54px;
  border-left: 1px solid #d8d8d8;
}

.vgroup {
  display: flex;
  flex-direction: column;
  align-items: center;
}

.right .vgroup {
  padding-right: 2px;
}

.vgroup::before {
  content: "";
  width: calc(100% - 5px);
  height: 5px;
  margin-top: 2px;
  border-bottom: 2px dotted #c0c0c0;
}

.vgroup + .vgroup {
  margin-top: 2px;
  border-top: 1px solid #bcbcbc;
}

.vgroup button {
  width: 25px;
  height: 25px;
  display: flex;
  align-items: center;
  justify-content: center;
}

.vgroup .on {
  border: 1px solid #99d1ff;
  background: #cce8ff;
}

.vgroup .ratio {
  font: bold 11px "Liberation Serif", serif;
}

.vgroup .labelled {
  width: auto;
  height: 42px;
  flex-direction: column;
  white-space: nowrap;
}

.center {
  flex: 1;
  min-width: 0;
  display: flex;
  flex-direction: column;
  gap: 4px;
}

.upper {
  flex: 1;
  min-height: 0;
  display: flex;
}

/* docks */
.docks {
  width: 397px;
  padding: 1px 4px 0 0;
  display: flex;
  flex-direction: column;
}

.dock h2 {
  height: 16px;
  padding: 1px 3px 0 4px;
  display: flex;
  align-items: center;
  gap: 9px;
  background: #d9d9d9;
  border: 1px solid #c2c2c2;
}

.dock h2 svg {
  width: 9px;
  height: 9px;
}

.dock h2 button:first-of-type {
  margin-left: auto;
}

.panel {
  margin: 9px 7px 12px 8px;
  border: 1px solid #8d95a0;
  background: #fff;
}

input[type="checkbox"] {
  appearance: none;
  width: 11px;
  height: 11px;
  margin: 0;
  flex: none;
  display: block;
  border: 1px solid #777;
  border-radius: 3px;
  background: #f8f8f8;
}

input[type="checkbox"]:checked {
  border-color: #005fb8;
  background: #005fb8;
}

input[type="checkbox"]:checked::after {
  content: "";
  display: block;
  width: 6px;
  height: 4px;
  margin: 2px 1px;
  border: solid #cfe4f6;
  border-width: 0 0 1px 1px;
  transform: rotate(-45deg);
}

/* object tree */
.tree {
  height: 200px;
  margin-right: 6px;
  padding-bottom: 15px;
  display: grid;
  grid-auto-rows: 1fr;
}

.tree li {
  display: flex;
  min-height: 0;
}

.tree .l1,
.tree .l2 {
  padding-left: 17px;
}

.tree i {
  width: 17px;
  flex: none;
}

.tree label {
  flex: 1;
  min-width: 0;
  display: flex;
  align-items: center;
  white-space: nowrap;
}

.tree input {
  margin: 0 4px 0 1px;
}

.tree svg {
  width: 13px;
  height: 13px;
  margin-right: 4px;
  color: #d4d8dc;
}

.arrow::before {
  content: "";
  display: block;
  width: 0;
  margin: 4px 0 0 5px;
  border-left: 6px solid #5c3c3c;
  border-top: 5px solid transparent;
  border-bottom: 5px solid transparent;
}

.arrow.open::before {
  margin: 5px 0 0 3px;
  border-top: 6px solid #5c3c3c;
  border-left: 5px solid transparent;
  border-right: 5px solid transparent;
  border-bottom: 0;
}

.line {
  background: linear-gradient(#ccc, #ccc) 8px 0 / 1px 100% no-repeat;
}

.elbow::before {
  content: "";
  display: block;
  width: 9px;
  height: 9px;
  margin-left: 7px;
  border: solid #ccc;
  border-width: 0 0 1px 1px;
}

.tree .selected label {
  background: #cce8ff;
  outline: 1px solid #3c7fb1;
  outline-offset: -1px;
}

.tree .selected svg {
  color: #9cc4e4;
}

/* properties */
.props {
  flex: 1;
  min-height: 0;
  display: flex;
  flex-direction: column;
}

.props .panel {
  flex: 1 1 0;
  min-height: 0;
  margin-bottom: 8px;
}

.scroll {
  display: flex;
  overflow: hidden;
}

table {
  flex: 1;
  align-self: flex-start;
  border-collapse: collapse;
  table-layout: fixed;
}

th, td {
  height: 15px;
  padding: 0 0 0 3px;
  line-height: 13px;
  text-align: left;
  font-weight: normal;
}

th {
  height: 19px;
}

th:first-child {
  width: 95px;
  border-right: 1px solid #e4e4e4;
}

.alt {
  background: #f4f4f4;
}

.section td {
  padding-left: 1px;
  background: #a8a8a8;
  color: #f4f4f4;
}

.combo td {
  height: 20px;
}

.combo td + td {
  padding: 0 0 0 1px;
}

.tall td {
  height: 42px;
}

.select {
  position: relative;
  height: 20px;
  display: flex;
  align-items: center;
  border: 1px solid #d0d0d0;
  background: #fdfdfd;
}

.select select {
  appearance: none;
  flex: 1;
  padding: 0 2px;
  border: 0;
  background: none;
  color: inherit;
  font: inherit;
}

.select .rgb {
  width: 14px;
  height: 14px;
  margin-left: 3px;
}

.select .chev {
  position: absolute;
  right: 3px;
  width: 8px;
  height: 6px;
}

.track {
  width: 14px;
  background: #f0f0f0;
}

.track i {
  display: block;
  width: 2px;
  height: 50px;
  margin: 13px 0 0 3px;
  background: #a0a0a0;
}

/* 3D view */
.view {
  flex: 1;
  position: relative;
  display: flex;
  align-items: center;
  justify-content: center;
  padding-top: 5px;
  background: linear-gradient(#0a6697, #000);
}

.scale {
  position: absolute;
  right: 76px;
  bottom: 11px;
  width: 280px;
  color: #fff;
  font-weight: bold;
  text-align: center;
}

.scale i {
  display: block;
  height: 5px;
  margin-bottom: 6px;
  border: solid #ccc;
  border-width: 0 1px;
  background: linear-gradient(#ccc, #ccc) 0 2px / 100% 1px no-repeat;
}

.axes {
  position: absolute;
  right: 6px;
  bottom: 26px;
  font-size: 10px;
  font-weight: bold;
}

/* console */
.console .panel {
  height: 81px;
  margin-bottom: 6px;
}

.console ol {
  flex: 1;
  padding-top: 2px;
}

.console li {
  height: 15px;
  padding-left: 3px;
}

.console li:nth-child(odd) {
  background: #f4f4f4;
}

.console .warn {
  color: #8b1a1a;
}

.console .track i {
  height: 15px;
  margin-top: 49px;
}
```
FILE: cloud.js
```js
const canvas = document.getElementById('cloud-view');
const ctx = canvas.getContext('2d');

// seeded so that the scan looks the same on each load
let seed = 21687;
function rnd() {
  seed = (seed * 1664525 + 1013904223) >>> 0;
  return seed / 4294967296;
}

function dot(x, y, c, a) {
  const k = 0.65 + rnd() * 0.6;
  ctx.fillStyle = `rgba(${c[0] * k | 0},${c[1] * k | 0},${c[2] * k | 0},${a})`;
  ctx.fillRect(x, y, 1, 1);
}

function rect(x, y, w, h, density, colors, a = 0.9) {
  for (let j = y; j < y + h; j++) {
    for (let i = x; i < x + w; i++) {
      if (rnd() < density) dot(i, j, colors[rnd() * colors.length | 0], a);
    }
  }
}

// even disc, a bit denser at the rim
function disc(cx, cy, rx, ry, density, colors) {
  for (let j = -ry; j <= ry; j++) {
    for (let i = -rx; i <= rx; i++) {
      const d = (i * i) / (rx * rx) + (j * j) / (ry * ry);
      if (d < 1 && rnd() < density * (0.6 + d * 0.6)) dot(cx + i, cy + j, colors[rnd() * colors.length | 0], 0.9);
    }
  }
}

// soft patch that fades out towards its edge
function blob(cx, cy, rx, ry, density, colors) {
  for (let j = -ry; j <= ry; j++) {
    for (let i = -rx; i <= rx; i++) {
      const d = (i * i) / (rx * rx) + (j * j) / (ry * ry);
      if (rnd() < density * (1 - d)) dot(cx + i, cy + j, colors[rnd() * colors.length | 0], 0.85);
    }
  }
}

function line(x1, y1, x2, y2, c, density = 0.85, width = 1) {
  const n = Math.max(Math.abs(x2 - x1), Math.abs(y2 - y1));
  for (let i = 0; i <= n; i++) {
    for (let k = 0; k < width; k++) {
      if (rnd() < density) dot(Math.round(x1 + (x2 - x1) * i / n) + k, Math.round(y1 + (y2 - y1) * i / n), c, 0.9);
    }
  }
}

const WHITE = [235, 242, 248], CREAM = [205, 202, 180], BLACK = [18, 18, 22];
const ORANGE = [225, 140, 65], OLIVE = [150, 165, 60], RED = [240, 40, 25];
const TAN = [158, 138, 120], BROWN = [75, 55, 45], GREY = [125, 130, 140];

// floor: cool at the left, warmer towards the bottom right
for (let y = 3; y < 517; y++) {
  for (let x = 4; x < 355; x++) {
    const bare = x > 262 && y < 80;
    if (rnd() > (bare ? 0.15 : 0.66)) continue;
    const warm = Math.min(1, 0.2 + x / 320 + (y > 380 ? (y - 380) / 160 : 0) + (y < 60 ? 0.3 : 0));
    const dim = 1 - Math.max(0, y - 260) / 1500;
    dot(x, y, [(118 + 36 * warm) * dim, (128 + 2 * warm) * dim, (146 - 34 * warm) * dim], 0.72);
  }
}
rect(8, 5, 86, 45, 0.2, [[150, 95, 55], BROWN]);
blob(60, 395, 110, 65, 0.35, [[80, 98, 138]]);
rect(8, 460, 345, 56, 0.15, [BLACK, [120, 90, 60]]);
rect(82, 490, 190, 26, 0.35, [BLACK]);
rect(3, 150, 30, 75, 0.25, [BLACK, [60, 90, 80]]);

// desks along the top wall
rect(112, 6, 76, 52, 0.55, [CREAM, CREAM, BLACK, TAN]);
rect(188, 6, 74, 52, 0.55, [CREAM, CREAM, GREY, BLACK]);
blob(158, 22, 32, 8, 0.8, [BLACK]);
blob(225, 17, 40, 7, 0.8, [BLACK, BROWN]);
blob(150, 46, 32, 12, 0.6, [BLACK]);
blob(194, 18, 7, 10, 0.9, [BLACK]);
blob(142, 66, 20, 14, 0.7, [BLACK, BROWN, TAN]);
blob(224, 68, 26, 17, 0.8, [BLACK, BROWN, [90, 90, 50]]);
rect(88, 56, 24, 9, 0.6, [BROWN, BLACK]);
rect(100, 38, 12, 20, 0.5, [BROWN, BLACK]);
blob(290, 18, 46, 20, 0.5, [BLACK, [60, 60, 50]]);
blob(288, 48, 26, 28, 0.5, [[50, 80, 50], BLACK]);
blob(292, 72, 14, 24, 0.9, [BLACK, TAN, BROWN]);
line(94, 6, 94, 58, ORANGE);
line(112, 6, 112, 60, ORANGE, 0.9, 2);
line(94, 6, 112, 6, ORANGE);
line(188, 6, 188, 57, OLIVE);
line(261, 12, 261, 58, OLIVE);
line(112, 57, 261, 57, CREAM, 0.7);
blob(104, 20, 7, 10, 0.7, [WHITE, [110, 60, 160]]);

// desks on the right wall
[40, 103, 166, 228].forEach((y, i) => {
  rect(304, y, 49, i === 3 ? 44 : 61, 0.5, [CREAM, GREY, i === 1 || i === 3 ? WHITE : TAN, BLACK, CREAM]);
  line(304, y, 352, y, OLIVE, 0.95);
  line(304, y + 1, 352, y + 1, OLIVE, 0.6);
});
blob(311, 122, 13, 18, 1, [BLACK, [60, 35, 15]]);
blob(297, 136, 11, 22, 0.6, [BLACK, TAN]);
blob(300, 260, 16, 24, 0.8, [BLACK, TAN]);
blob(340, 48, 10, 12, 0.7, [BLACK, BROWN]);
blob(342, 108, 10, 8, 0.7, [BLACK, GREY]);
rect(312, 272, 40, 17, 0.3, [CREAM, BLACK, TAN]);

// floor grilles and the dark tile
rect(157, 77, 30, 25, 0.7, [BLACK, BROWN, [70, 75, 80]]);
rect(158, 372, 30, 27, 0.7, [BLACK, BROWN, BROWN]);
rect(84, 443, 30, 30, 0.55, [BROWN, [60, 40, 42]]);
for (let y = 0; y < 34; y++) {
  rect(44, 146 + y, 34, 1, 1 - y / 60, y < 15 ? [BLACK, BLACK, [28, 16, 60]] : [[50, 42, 85], GREY, [40, 30, 60]]);
}
rect(66, 146, 12, 12, 0.6, [[35, 10, 110]]);

// meeting table with its chairs
for (let y = 266; y < 342; y++) {
  for (let x = 8; x < 192; x++) {
    const top = 266 + x * 0.07, bottom = 330 + x * 0.06;
    if (y > top && y < bottom && rnd() < 0.5) dot(x, y, [CREAM, TAN, CREAM, GREY, BROWN][rnd() * 5 | 0], 0.85);
  }
}
[[42, 262], [82, 264], [140, 268], [39, 337], [70, 338], [92, 339], [138, 344]].forEach(([x, y]) => {
  blob(x, y, 18, 8, 1, [BLACK, BLACK, [45, 45, 75]]);
});
[[40, 316], [75, 318], [135, 318], [125, 300]].forEach(([x, y]) => blob(x, y, 18, 7, 0.6, [BLACK, BROWN]));
[[28, 257, 26, 292], [62, 259, 57, 290], [97, 262, 93, 294], [126, 264, 128, 282], [159, 265, 156, 296],
 [56, 312, 57, 341], [98, 318, 94, 344], [123, 315, 120, 348], [155, 318, 154, 349], [24, 300, 24, 342]].forEach(p => {
  line(...p, [205, 120, 50], 0.65, 2);
});
line(12, 270, 26, 288, ORANGE, 0.7);
line(190, 282, 174, 296, ORANGE, 0.7);
line(173, 321, 187, 337, ORANGE, 0.7);

// ceiling lights
[[42, 32], [153, 32], [42, 181], [154, 181], [264, 181], [265, 292], [43, 441], [155, 441], [266, 441]].forEach(([x, y]) => {
  rect(x, y, 37, 37, 0.55, [WHITE], 0.95);
  rect(x + 17, y + 3, 4, 31, 0.7, [[18, 60 - y / 10, 85 - y / 7]]);
});
blob(290, 200, 12, 20, 0.8, [BLACK, BROWN]);

// ladder and door recess
line(274, 298, 330, 295, ORANGE);
line(274, 315, 330, 313, ORANGE);
line(274, 298, 274, 315, ORANGE);
ctx.clearRect(332, 291, 26, 26);
line(331, 290, 331, 317, GREY);
line(331, 290, 357, 290, GREY);

// round stools
disc(305, 349, 26, 26, 0.5, [RED, RED, [190, 60, 35]]);
disc(289, 382, 15, 15, 0.5, [[200, 180, 110]]);
disc(306, 450, 14, 17, 0.35, [[200, 170, 110]]);
disc(326, 490, 26, 26, 0.5, [RED, RED, [200, 70, 45]]);

// walls
line(6, 3, 6, 68, [60, 22, 14], 0.95, 2);
line(6, 450, 6, 512, [90, 25, 14], 0.9, 2);
line(3, 68, 3, 440, WHITE, 0.6);
line(354, 10, 354, 512, CREAM, 0.45);
line(5, 3, 354, 3, CREAM, 0.6);
line(6, 516, 354, 516, GREY, 0.95);
line(6, 517, 354, 517, CREAM, 0.3);
line(20, 150, 20, 225, CREAM, 0.8, 4);
line(80, 487, 248, 487, ORANGE, 0.95);
line(80, 488, 248, 488, [150, 100, 60], 0.7);
line(80, 487, 80, 514, [150, 100, 60], 0.8);
disc(203, 513, 5, 3, 0.6, [RED, TAN]);

// bounding box and picked points
ctx.strokeStyle = '#b9c42c';
ctx.strokeRect(0.5, 0.5, 359, 520);
ctx.fillStyle = '#b9c42c';
ctx.fillRect(69, 119, 14, 1);
ctx.fillRect(76, 112, 1, 14);
ctx.fillStyle = '#8fa0ac';
ctx.fillRect(172, 257, 15, 1);
ctx.fillRect(179, 250, 1, 15);
```
